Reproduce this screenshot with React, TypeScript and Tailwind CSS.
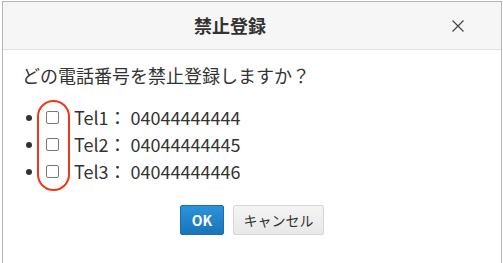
import React from 'react';

const FONT = "font-['Noto_Sans_CJK_JP','Noto_Sans',sans-serif]";

const phones = [
  { label: 'Tel1', number: '04044444444' },
  { label: 'Tel2', number: '04044444445' },
  { label: 'Tel3', number: '04044444446' },
];

const App: React.FC = () => {
  return (
    <div className={`w-[503px] h-[263px] bg-white overflow-hidden ${FONT}`}>
      <div className="ml-[2px] mt-[1px] w-[500px] h-[300px] border border-[#b5b5b5] bg-white">
        {/* Header */}
        <div className="relative h-[48px] bg-[#f6f6f6] border-b border-[#e2e2e2] flex items-center justify-center pr-[44px]">
          <span className="text-[18px] font-bold text-[#333] leading-none -mt-[2px]">禁止登録</span>
          <button className="absolute right-[36px] top-[17px] w-[14px] h-[14px] text-[#444]">
            <svg viewBox="0 0 14 14" className="w-[14px] h-[14px]" fill="none" stroke="currentColor" strokeWidth="1.2">
              <path d="M1.5 1.5l11 11M12.5 1.5l-11 11" />
            </svg>
          </button>
        </div>

        {/* Body */}
        <div className="px-[19px] pt-[13px]">
          <p className="text-[18px] leading-[24px] text-[#333]">どの電話番号を禁止登録しますか？</p>

          <div className="relative mt-[17px] pl-[4px]">
            <ul className="flex flex-col">
              {phones.map((p) => (
                <li key={p.label} className="flex items-center h-[27px]">
                  <span className="w-[6px] h-[6px] rounded-full bg-[#333]" />
                  <span className="ml-[14px] w-[13px] h-[13px] border border-[#7a7a7a] rounded-[2px] bg-white" />
                  <span className="ml-[15px] -mt-[2px] text-[18px] text-[#333] leading-none">
                    {p.label}：&nbsp;{p.number}
                  </span>
                </li>
              ))}
            </ul>
            <div className="absolute left-[15px] top-[-4px] w-[33px] h-[91px] border-2 border-[#f2361a] rounded-full pointer-events-none" />
          </div>

          <div className="flex justify-center gap-[9px] mt-[20px]">
            <button className="w-[44px] h-[30px] rounded-[2px] bg-gradient-to-b from-[#2b93da] to-[#1a74ba] border border-[#1a6fb0] text-white text-[14px] font-bold">
              OK
            </button>
            <button className="w-[91px] h-[30px] rounded-[2px] bg-gradient-to-b from-[#f4f4f4] to-[#e8e8e8] border border-[#d6d6d6] text-[#333] text-[14px]">
              キャンセル
            </button>
          </div>
        </div>
      </div>
    </div>
  );
};

export default App;
